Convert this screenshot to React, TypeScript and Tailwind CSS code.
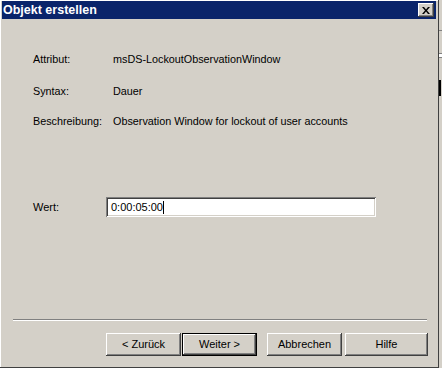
const font = { fontFamily: '"Liberation Sans", Arial, sans-serif' };

const raised =
  'shadow-[inset_-1px_-1px_0_#404040,inset_1px_1px_0_#ffffff,inset_-2px_-2px_0_#808080,inset_2px_2px_0_#d4d0c8]';

const Button = ({
  label,
  width,
  isDefault = false,
  className = '',
}: {
  label: string;
  width: string;
  isDefault?: boolean;
  className?: string;
}) => (
  <div
    className={`${width} h-[23px] flex items-center justify-center bg-[#d4d0c8] text-[11px] text-black ${
      isDefault ? 'border border-black' : ''
    } ${className}`}
  >
    <div className={`w-full h-full flex items-center justify-center ${raised}`}>
      {label}
    </div>
  </div>
);

const Row = ({
  label,
  value,
  className = '',
}: {
  label: string;
  value: string;
  className?: string;
}) => (
  <div className={`flex h-[13px] leading-[13px] text-[10.8px] text-black ${className}`}>
    <span className="w-[80px] ml-[31px]">{label}</span>
    <span>{value}</span>
  </div>
);

export default function App() {
  return (
    <div className="w-[442px] h-[368px] flex bg-[#d4d0c8] overflow-hidden" style={font}>
      <div className="w-[439px] h-[368px] flex flex-col bg-[#d4d0c8] pt-[1px] px-[2px] border-r border-b border-[#404040] shadow-[inset_1px_1px_0_#ffffff]">
        <header className="h-[18px] flex items-center justify-between bg-[#0a246a] pl-[1px] pr-[2px]">
          <span className="text-white font-bold text-[12.5px] leading-[14px]">Objekt erstellen</span>
          <div className={`w-[16px] h-[14px] flex items-center justify-center bg-[#d4d0c8] ${raised}`}>
            <svg width="8" height="7" viewBox="0 0 8 7">
              <path d="M0 0h2l2 2.5L6 0h2L5 3.5 8 7H6L4 4.5 2 7H0l3-3.5z" fill="#000" />
            </svg>
          </div>
        </header>

        <Row label="Attribut:" value="msDS-LockoutObservationWindow" className="mt-[34px]" />
        <Row label="Syntax:" value="Dauer" className="mt-[19px]" />
        <Row
          label="Beschreibung:"
          value="Observation Window for lockout of user accounts"
          className="mt-[17px]"
        />

        <div className="flex items-center mt-[69px] h-[20px] text-[11px] text-black">
          <span className="w-[73px] ml-[31px]">Wert:</span>
          <div className="w-[270px] h-[20px] bg-white flex items-center pl-[5px] shadow-[inset_1px_1px_0_#808080,inset_-1px_-1px_0_#ffffff,inset_2px_2px_0_#404040,inset_-2px_-2px_0_#d4d0c8]">
            <span className="leading-[13px]">0:00:05:00</span>
            <span className="w-[1px] h-[13px] bg-black" />
          </div>
        </div>

        <div className="mt-[102px] ml-[11px] w-[414px] h-[2px] border-t border-b border-t-[#808080] border-b-white" />

        <div className="flex mt-[12px] ml-[104px]">
          <Button label="< Zurück" width="w-[75px]" />
          <Button label="Weiter >" width="w-[75px]" isDefault className="ml-[1px]" />
          <Button label="Abbrechen" width="w-[75px]" className="ml-[10px]" />
          <Button label="Hilfe" width="w-[83px]" className="ml-[3px]" />
        </div>
      </div>

      <div className="flex-1 flex flex-col bg-[#d4d0c8]">
        <div className="h-[30px]" />
        <div className="h-[1px] bg-[#808080]" />
        <div className="h-[22px]" />
        <div className="h-[1px] bg-[#808080]" />
        <div className="h-[3px] bg-white" />
        <div className="h-[1px] bg-[#808080]" />
        <div className="h-[22px]" />
        <div className="h-[16px] w-[2px] bg-black" />
      </div>
    </div>
  );
}
